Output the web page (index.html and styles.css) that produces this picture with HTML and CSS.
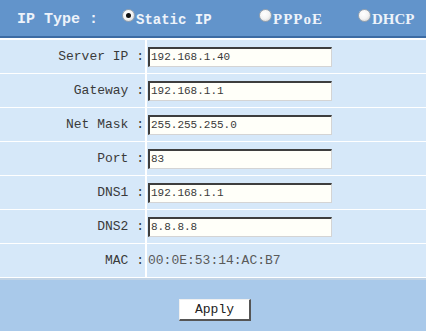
FILE: index.html
```html
<!DOCTYPE html>
<html>
<head>
<meta charset="utf-8">
<link rel="stylesheet" href="styles.css">
</head>
<body>
<div class="page">
  <div class="header">
    <span class="title">IP Type :</span>
    <span class="opt opt-static"><span class="radio checked"></span><span class="mono-b">Static IP</span></span>
    <span class="opt opt-pppoe"><span class="radio"></span><span class="serif-b pppoe">PPPoE</span></span>
    <span class="opt opt-dhcp"><span class="radio"></span><span class="serif-b">DHCP</span></span>
  </div>
  <div class="rows">
    <div class="label">Server IP :</div><div class="val"><span class="input">192.168.1.40</span></div>
    <div class="label">Gateway :</div><div class="val"><span class="input">192.168.1.1</span></div>
    <div class="label">Net Mask :</div><div class="val"><span class="input">255.255.255.0</span></div>
    <div class="label">Port :</div><div class="val"><span class="input">83</span></div>
    <div class="label">DNS1 :</div><div class="val"><span class="input">192.168.1.1</span></div>
    <div class="label">DNS2 :</div><div class="val"><span class="input">8.8.8.8</span></div>
    <div class="label">MAC :</div><div class="val"><span class="mac">00:0E:53:14:AC:B7</span></div>
  </div>
  <div class="footer">
    <button class="apply">Apply</button>
  </div>
</div>
</body>
</html>
```

FILE: styles.css
```css
html, body { margin: 0; padding: 0; background: #ffffff; }
.page { width: 426px; height: 331px; display: flex; flex-direction: column; overflow: hidden; }
.header {
  height: 36px; background: #6294cb; border-bottom: 2px solid #3c6ba3;
  display: flex; align-items: center; color: #eef3fa;
  box-sizing: content-box;
}
.title { font-family: "Liberation Mono", monospace; font-weight: bold; font-size: 15px; margin-left: 17px; width: 105px; padding-top: 3px; }
.opt { display: flex; align-items: center; }
.opt-static { width: 137px; }
.opt-pppoe { width: 99px; }
.mono-b { font-family: "Liberation Mono", monospace; font-weight: bold; font-size: 14px; padding-top: 3px; }
.serif-b { font-family: "Liberation Serif", serif; font-weight: bold; font-size: 15px; padding-top: 3px; }
.pppoe { letter-spacing: 1px; }
.radio {
  width: 11px; height: 11px; border-radius: 50%;
  background: radial-gradient(circle at 40% 35%, #ffffff 0%, #f4f4f4 50%, #c8c8c8 100%);
  border: 1px solid #9aa4ae; margin-top: -6px; margin-right: 1px; position: relative;
}
.radio.checked::after {
  content: ""; position: absolute; left: 3px; top: 3px; width: 5px; height: 5px; border-radius: 50%; background: #111;
}
.rows {
  display: grid; grid-template-columns: 145px 1fr; grid-auto-rows: 33px;
  column-gap: 2px; row-gap: 1px; padding-top: 2px; background: #ffffff;
}
.label {
  background: #d6e8f9; text-align: right; display: flex; align-items: center; justify-content: flex-end;
  font-family: "Liberation Mono", monospace; font-size: 13px; color: #3a3a3a; padding-right: 1px;
}
.val { background: #d6e8f9; display: flex; align-items: center; padding-left: 1px; }
.input {
  width: 180px; height: 17px; background: #fffff9;
  border-top: 2px solid #3e3e3e; border-left: 2px solid #3e3e3e;
  border-right: 1px solid #d4d4d4; border-bottom: 1px solid #d4d4d4;
  font-family: "Liberation Mono", monospace; font-size: 11px; color: #3a3a3a;
  line-height: 17px; padding-left: 1px; box-sizing: content-box; margin-top: 1px;
}
.mac { font-family: "Liberation Mono", monospace; font-size: 13px; color: #5a5a5a; }
.footer {
  flex: 1; background: #a9c9ea; border-top: 2px solid #c2d4e6; margin-top: 1px;
  display: flex; justify-content: center; align-items: flex-start; padding-top: 19px;
}
.apply {
  width: 72px; height: 22px; background: #ffffff; margin-left: 4px;
  border-top: 1px solid #f0f0f0; border-left: 1px solid #f0f0f0;
  border-right: 2px solid #555; border-bottom: 2px solid #555;
  font-family: "Liberation Mono", monospace; font-size: 13px; color: #222; padding: 0;
}
```
